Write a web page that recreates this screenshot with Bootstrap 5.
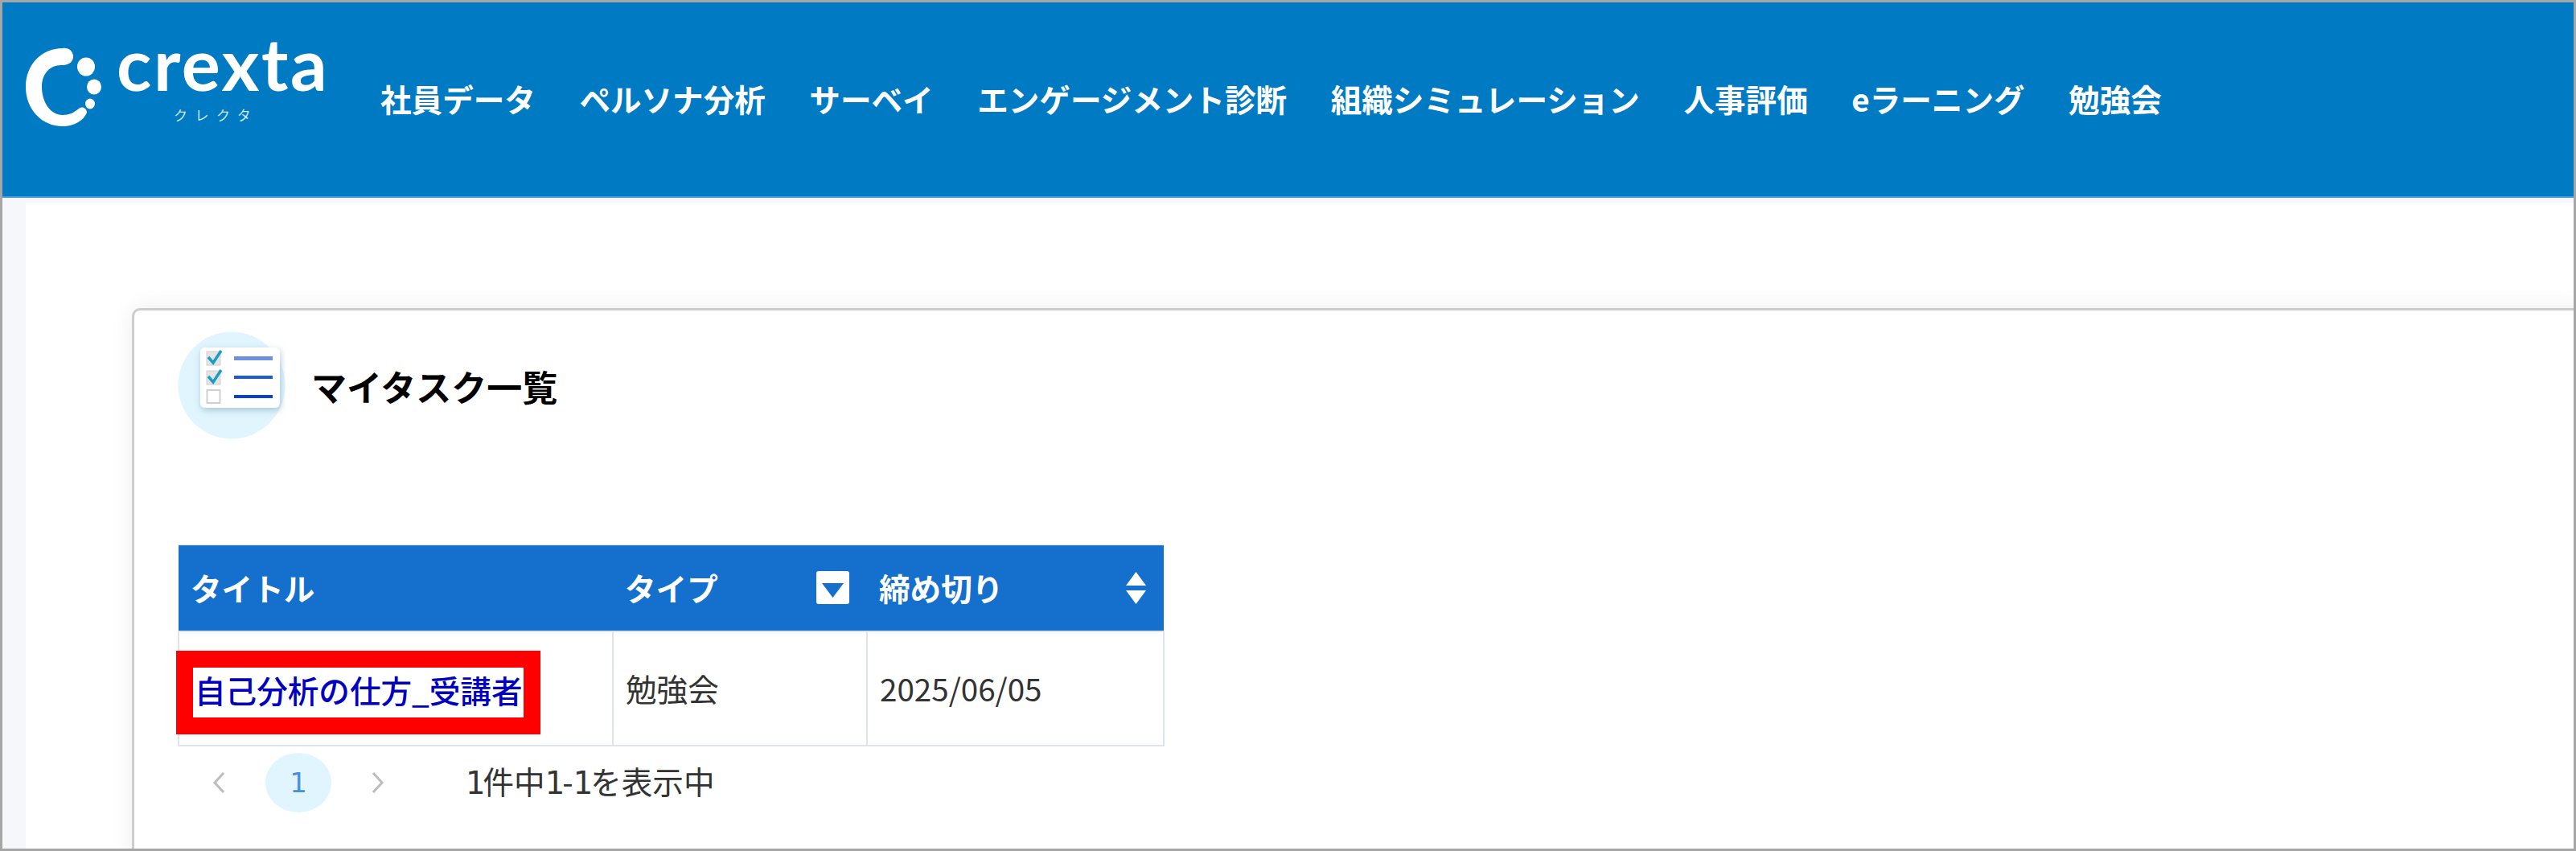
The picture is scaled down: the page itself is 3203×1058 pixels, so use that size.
<!DOCTYPE html>
<html lang="ja">
<head>
<meta charset="utf-8">
<title>マイタスク一覧</title>
<link href="https://cdn.jsdelivr.net/npm/bootstrap@5.3.0/dist/css/bootstrap.min.css" rel="stylesheet">
<style>
html, body { margin: 0; height: 100%; background: #fff; overflow: hidden; }
body { font-family: "Noto Sans CJK JP", "Noto Sans", sans-serif; color: #333; font-size: 38.6px; }
.frame { height: 1058px; border: 3px solid #a6a6a6; display: flex; flex-direction: column; overflow: hidden; }
.topbar { height: 243px; flex: none; background: #007bc3; border-bottom: 2px solid #4aa0d6; align-items: flex-start; padding: 0; flex-wrap: nowrap; justify-content: flex-start; }
.logo { width: 444px; height: 170px; flex: none; margin-top: 45px; margin-left: 26px; }
.logo-name { font-family: Lato, sans-serif; font-size: 90px; font-weight: 700; letter-spacing: 2.5px; line-height: 1; color: #fff; margin: -15px 0 0 116px; }
.logo-kana { font-size: 17px; letter-spacing: 9.500px; line-height: 1; color: #cfe6f5; margin: 11px 0 0 187px; white-space: nowrap; }
.logo-wrap { position: relative; }
.logo-mark { position: absolute; left: -26px; top: -45px; }
.topnav { gap: 54.500px; margin-top: 93px; flex-wrap: nowrap; flex-direction: row; }
.topnav .nav-link { color: #fff; font-weight: 700; font-size: 38.6px; line-height: 52px; padding: 0; white-space: nowrap; }
.stage { flex: 1 1 auto; min-height: 0; display: flex; background: #f6f7fb; padding: 6px 0 0 29px; }
.workspace { flex: 1 1 auto; background: #fff; padding: 131px 0 0 132px; min-width: 0; }
.task-card { margin: 0 -24px -60px 0; height: 720px; border: 3px solid #cdcdcd; border-radius: 10px; box-shadow: 0 0 28px rgba(0,0,0,.07); padding: 26px 0 0 54px; }
.task-head { display: flex; align-items: center; gap: 32px; height: 134px; margin-bottom: 131px; }
.task-title { font-size: 44px; font-weight: 700; color: #000; margin: 2px 0 0; line-height: 1.2; }
.task-table { width: 1227px; table-layout: fixed; margin: 0; border-color: #dfe3ea; border-width: 2px; }
.task-table th { background: #1470cc; color: #fff; font-weight: 700; height: 107px; padding: 0 22px 0 15px; vertical-align: middle; border-color: #dfe3ea; border-width: 0; line-height: 1; box-shadow: none; }
.task-table td { height: 142px; padding: 0 0 0 15px; vertical-align: middle; color: #333; border-width: 2px; border-color: #dfe3ea; line-height: 1.2; box-shadow: none; }
.col-a { width: 540px; }
.col-b { width: 316px; }
.head-cell { display: flex; align-items: center; justify-content: space-between; }
.task-link { display: inline-block; padding: 0 2px; height: 62px; line-height: 54px; color: #0000c0; font-weight: 500; text-decoration: none; outline: 21px solid #f00; white-space: nowrap; margin-left: 2px; margin-top: 10px; }
.pager-row { display: flex; align-items: center; margin: 8px 0 0 10px; height: 74px; }
.pager { margin: 0; gap: 18px; align-items: center; }
.pager .page-link { width: 82px; height: 74px; padding: 0; display: flex; align-items: center; justify-content: center; border: 0; background: transparent; color: #4a90d9; font-size: 34px; line-height: 1; font-family: "DejaVu Sans", sans-serif; }
.pager .page-item.active .page-link { background: #e1f5fe; color: #4a90d9; border-radius: 50%; }
.pager-info { margin-left: 68px; line-height: 1; color: #333; }
.footed-one { font-family: "DejaVu Sans", sans-serif; letter-spacing: -3px; }
</style>
</head>
<body>
<div class="frame">
  <nav class="navbar topbar">
    <div class="logo logo-wrap">
      <svg class="logo-mark" width="140" height="170" viewBox="0 0 140 170" aria-hidden="true">
        <g transform="translate(-3,-3)" fill="#fff">
          <path d="M78 60C52 60 32 80 32 108C32 136 52 157 78 157C92 157 104 150 108 140C108 134 102 132 98 135C92 140 86 143 78 143C62 143 52 126 52 108C52 92 62 80 78 81C86 81 92 76 91 69C90 63 85 59 78 60Z"/>
          <ellipse cx="107" cy="83" rx="11" ry="11.5"/>
          <ellipse cx="117" cy="108" rx="9" ry="9.500"/>
          <ellipse cx="112" cy="129" rx="6" ry="6.500"/>
        </g>
      </svg>
      <div class="logo-name">crexta</div>
      <div class="logo-kana">クレクタ</div>
    </div>
    <ul class="nav topnav">
      <li class="nav-item"><a class="nav-link" href="#">社員データ</a></li>
      <li class="nav-item"><a class="nav-link" href="#">ペルソナ分析</a></li>
      <li class="nav-item"><a class="nav-link" href="#">サーベイ</a></li>
      <li class="nav-item"><a class="nav-link" href="#">エンゲージメント診断</a></li>
      <li class="nav-item"><a class="nav-link" href="#">組織シミュレーション</a></li>
      <li class="nav-item"><a class="nav-link" href="#">人事評価</a></li>
      <li class="nav-item"><a class="nav-link" href="#">eラーニング</a></li>
      <li class="nav-item"><a class="nav-link" href="#">勉強会</a></li>
    </ul>
  </nav>
  <div class="stage">
    <main class="workspace">
      <section class="card task-card">
        <div class="task-head">
          <svg width="134" height="134" viewBox="0 0 134 134" aria-hidden="true">
            <defs><filter id="cardShadow" x="-20%" y="-20%" width="140%" height="140%"><feDropShadow dx="1" dy="3" stdDeviation="4" flood-color="#5f8aa5" flood-opacity=".45"/></filter></defs>
            <circle cx="67" cy="67" r="66.500" fill="#e1f5fe"/>
            <rect x="28" y="20" width="99" height="75" rx="6" fill="#fff" filter="url(#cardShadow)"/>
            <rect x="36" y="25" width="17" height="17" fill="#e4e4e4" stroke="#cfcfcf"/>
            <rect x="36" y="49" width="17" height="17" fill="#e4e4e4" stroke="#cfcfcf"/>
            <rect x="36.500" y="73" width="16" height="16" fill="#fff" stroke="#cfcfcf" stroke-width="2"/>
            <path d="M38 32l6 7 10-15" fill="none" stroke="#1a9fc4" stroke-width="3.500"/>
            <path d="M38 56l6 7 10-15" fill="none" stroke="#1a9fc4" stroke-width="3.500"/>
            <rect x="70" y="31" width="48" height="5" fill="#6f8fe0"/>
            <rect x="70" y="55" width="48" height="4" fill="#1d5bd6"/>
            <rect x="70" y="79" width="48" height="4" fill="#0f3fd0"/>
          </svg>
          <h1 class="task-title">マイタスク一覧</h1>
        </div>
        <table class="table table-bordered task-table">
          <colgroup><col class="col-a"><col class="col-b"><col></colgroup>
          <thead>
            <tr>
              <th>タイトル</th>
              <th>
                <div class="head-cell">タイプ
                  <svg width="41" height="41" viewBox="0 0 41 41" aria-hidden="true"><rect width="41" height="41" rx="3" fill="#fff"/><path d="M7 15H34L20.500 33Z" fill="#1470cc"/></svg>
                </div>
              </th>
              <th>
                <div class="head-cell">締め切り
                  <svg width="25" height="40" viewBox="0 0 25 40" aria-hidden="true"><path d="M12.500 0L25 17H0Z" fill="#fff"/><path d="M0 23H25L12.500 40Z" fill="#fff"/></svg>
                </div>
              </th>
            </tr>
          </thead>
          <tbody>
            <tr>
              <td><a class="task-link" href="#">自己分析の仕方_受講者</a></td>
              <td>勉強会</td>
              <td>2025/06/05</td>
            </tr>
          </tbody>
        </table>
        <div class="pager-row">
          <ul class="pagination pager">
            <li class="page-item"><a class="page-link" href="#" aria-label="前へ"><svg width="16" height="28" viewBox="0 0 16 28" aria-hidden="true"><path d="M14 2L3 14L14 26" fill="none" stroke="#bdbdbd" stroke-width="3"/></svg></a></li>
            <li class="page-item active"><a class="page-link" href="#">1</a></li>
            <li class="page-item"><a class="page-link" href="#" aria-label="次へ"><svg width="16" height="28" viewBox="0 0 16 28" aria-hidden="true"><path d="M2 2L13 14L2 26" fill="none" stroke="#bdbdbd" stroke-width="3"/></svg></a></li>
          </ul>
          <span class="pager-info"><span class="footed-one">1</span>件中<span class="footed-one">1</span>-<span class="footed-one">1</span>を表示中</span>
        </div>
      </section>
    </main>
  </div>
</div>
<script src="https://cdn.jsdelivr.net/npm/bootstrap@5.3.0/dist/js/bootstrap.bundle.min.js"></script>
</body>
</html>
